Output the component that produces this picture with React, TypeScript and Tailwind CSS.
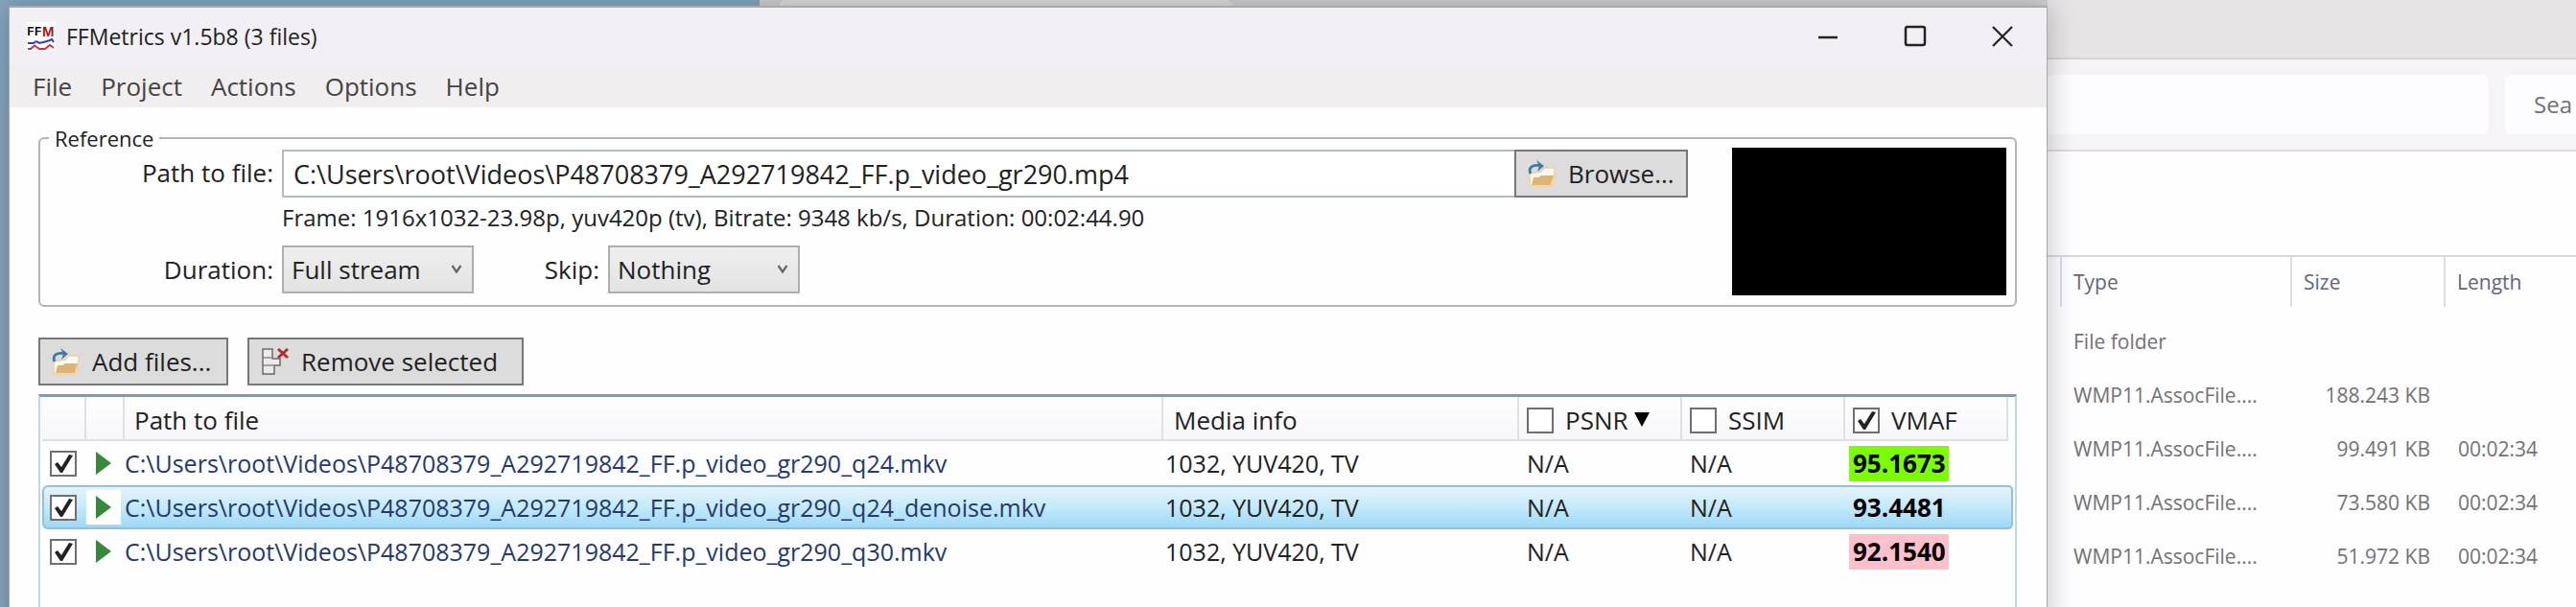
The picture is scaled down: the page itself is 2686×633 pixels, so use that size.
import type { ReactNode } from "react";

const files = [
  { name: "C:\\Users\\root\\Videos\\P48708379_A292719842_FF.p_video_gr290_q24.mkv", vmaf: "95.1673", badge: "bg-[#7bff00]", selected: false },
  { name: "C:\\Users\\root\\Videos\\P48708379_A292719842_FF.p_video_gr290_q24_denoise.mkv", vmaf: "93.4481", badge: "", selected: true },
  { name: "C:\\Users\\root\\Videos\\P48708379_A292719842_FF.p_video_gr290_q30.mkv", vmaf: "92.1540", badge: "bg-[#ffbfcb]", selected: false },
];

const explorerRows = [
  { type: "File folder", size: "", length: "" },
  { type: "WMP11.AssocFile....", size: "188.243 KB", length: "" },
  { type: "WMP11.AssocFile....", size: "99.491 KB", length: "00:02:34" },
  { type: "WMP11.AssocFile....", size: "73.580 KB", length: "00:02:34" },
  { type: "WMP11.AssocFile....", size: "51.972 KB", length: "00:02:34" },
];

function AppIcon() {
  return (
    <svg width="30" height="30" viewBox="0 0 30 30" className="bg-white" aria-hidden="true">
      <text x="0" y="14" fontFamily="Liberation Mono" fontWeight="700" fontSize="13" fill="#111">FF</text>
      <text x="16" y="15" fontFamily="Liberation Sans" fontWeight="700" fontSize="15" fill="#b31217">M</text>
      <path d="M1 22H7L9 20.5H11L13 22L17 21L21 20L24 19L26 18L28 21" fill="none" stroke="#3536c8" strokeWidth="2" />
      <path d="M1 28H4L8 24.500L13 28H19L24 24L28 27" fill="none" stroke="#c0393c" strokeWidth="2" />
    </svg>
  );
}

function OpenIcon() {
  return (
    <svg width="29" height="28" viewBox="0 0 29 28" className="shrink-0" aria-hidden="true">
      <path d="M2 14V25Q2 27 4 27H23Q25 27 26 25L28 12V10Q28 8 26 8H17L14 12Z" fill="#fffaf0" stroke="#f2cf93" strokeWidth="1.500" />
      <path d="M6 18H11L14 16H27L24 26H4Z" fill="#dfb472" />
      <path d="M3 14C0 8 5 4.500 12 5.500" fill="none" stroke="#3c79ab" strokeWidth="2.800" />
      <path d="M9 0L17 6L10 12L12 6Z" fill="#3c79ab" />
    </svg>
  );
}

function RemoveIcon() {
  return (
    <svg width="29" height="28" viewBox="0 0 29 28" className="shrink-0" aria-hidden="true">
      <path d="M2 1H12V11H20V18H14V27H2Z" fill="#eceaea" stroke="#6c6a6b" strokeWidth="1.500" />
      <path d="M2 10H12M2 18H14" fill="none" stroke="#8c8a8b" strokeWidth="1.500" />
      <path d="M18 1L28 10M28 1L18 10" stroke="#b5302a" strokeWidth="3" />
    </svg>
  );
}

function Check({ label, checked = false, id }: { label?: string; checked?: boolean; id?: string }) {
  return (
    <span className="inline-grid h-[27px] w-7 shrink-0 align-middle">
      <input
        id={id}
        type="checkbox"
        aria-label={label}
        defaultChecked={checked}
        className="peer col-start-1 row-start-1 h-[27px] w-7 appearance-none border-2 border-[#6f6f70] bg-white"
      />
      <svg viewBox="0 0 28 27" className="pointer-events-none invisible col-start-1 row-start-1 h-[27px] w-7 peer-checked:visible" aria-hidden="true">
        <path d="M5 14L8 12L12 17L20 4L24 5L13 23H11Z" fill="#222" />
      </svg>
    </span>
  );
}

function Combo({ id, value }: { id: string; value: string }) {
  return (
    <span className="grid h-[50px] w-[200px] items-center">
      <select
        id={id}
        defaultValue={value}
        className="col-start-1 row-start-1 h-full w-full appearance-none border-2 border-[#adaeb1] bg-linear-to-b from-[#efefef] to-[#e4e3e4] pr-10 pl-2"
      >
        <option>{value}</option>
      </select>
      <svg width="12" height="10" viewBox="0 0 12 10" className="pointer-events-none col-start-1 row-start-1 mr-3 justify-self-end" aria-hidden="true">
        <path d="M1.500 1L6 7.500L10.500 1" fill="none" stroke="#666" strokeWidth="2.200" />
      </svg>
    </span>
  );
}

function ToolButton({ icon, children, width }: { icon: ReactNode; children: ReactNode; width: string }) {
  return (
    <button type="button" className={`flex h-[50px] shrink-0 items-center gap-[13px] border-2 border-[#77767a] bg-[#dddcdd] pl-3 whitespace-nowrap ${width}`}>
      {icon}
      <span>{children}</span>
    </button>
  );
}

function Explorer() {
  return (
    <section aria-label="File Explorer" className="absolute top-0 right-0 bottom-0 left-[792px] flex flex-col bg-[#fefdff] text-[21px] text-[#737174]">
      <div className="flex h-[62px] shrink-0 border-b-2 border-[#d6d4d5] bg-[#e6e4e4]">
        <div className="h-2 flex-1 bg-[#d0cfd1] pl-5">
          <div className="h-2 w-[474px] rounded-t-lg bg-[#dfdfde]" />
        </div>
        <div className="w-[551px]" />
      </div>
      <div className="flex h-24 shrink-0 justify-end gap-[17px] border-b-2 border-[#dddbdd] bg-[#f6f4f7] py-4">
        <div className="w-[460px] rounded-md bg-[#fdfcfe]" />
        <div className="flex w-[74px] items-center overflow-hidden rounded-l-md bg-[#fdfcfe] pl-[30px] text-[24px]">Sea</div>
      </div>
      <div className="h-[110px] shrink-0 border-b-2 border-[#d9d8da]" />
      <table className="ml-auto w-[538px] table-fixed border-collapse">
        <colgroup>
          <col className="w-[240px]" />
          <col className="w-[160px]" />
          <col />
        </colgroup>
        <thead>
          <tr className="h-[52px] text-left text-[#62677a]">
            <th className="border-l-2 border-[#dcdde2] pl-3 font-normal">Type</th>
            <th className="border-l-2 border-[#dcdde2] pl-3 font-normal">Size</th>
            <th className="border-l-2 border-[#dcdde2] pl-3 font-normal">Length</th>
          </tr>
        </thead>
        <tbody>
          <tr className="h-2"><td colSpan={3} /></tr>
          {explorerRows.map((row, i) => (
            <tr key={i} className="h-14">
              <td className="pl-[13px] whitespace-nowrap">{row.type}</td>
              <td className="pr-[15px] text-right whitespace-nowrap">{row.size}</td>
              <td className="pl-[14px]">{row.length}</td>
            </tr>
          ))}
        </tbody>
      </table>
    </section>
  );
}

function HeaderMetric({ name, checked = false, arrow = false }: { name: string; checked?: boolean; arrow?: boolean }) {
  const id = `metric-${name}`;
  return (
    <div className="flex items-center pl-2">
      <Check id={id} checked={checked} />
      <label htmlFor={id} className="pl-3">{name}</label>
      {arrow && (
        <svg width="16" height="15" viewBox="0 0 16 15" className="mb-0.5 ml-1.5" aria-hidden="true">
          <path d="M0 0H16L8 15Z" fill="#000" />
        </svg>
      )}
    </div>
  );
}

const headCell = "border-r-2 border-b-2 border-[#dfdfe4] bg-linear-to-b from-[#fefefe] to-[#f7f6f9] p-0 pt-1 text-left font-normal";

export default function App() {
  return (
    <div className="relative h-screen overflow-hidden bg-[#86a6c0] font-['Open_Sans','Noto_Sans',sans-serif] text-[26px] leading-8 text-[#222]">
      <Explorer />
      <main className="absolute top-1.5 right-[551px] bottom-[-20px] left-[9px] flex flex-col border-x border-t-2 border-[#a9a9ad] bg-[#fefdff] shadow-[0_0_28px_rgba(0,0,0,0.25)]">
        <header className="flex h-15 shrink-0 items-center bg-[#f3f0f5] pl-[18px]">
          <AppIcon />
          <h1 className="pl-[11px] text-[23px]">FFMetrics v1.5b8 (3 files)</h1>
          <div className="mr-[34px] ml-auto flex items-center gap-[67px]">
            <button type="button" aria-label="Minimize" className="block">
              <svg width="24" height="24" viewBox="0 0 24 24"><path d="M2 13H22" stroke="#222" strokeWidth="2.500" /></svg>
            </button>
            <button type="button" aria-label="Maximize" className="block">
              <svg width="24" height="24" viewBox="0 0 24 24"><rect x="2" y="2" width="20" height="19" rx="2" fill="none" stroke="#222" strokeWidth="2.500" /></svg>
            </button>
            <button type="button" aria-label="Close" className="block">
              <svg width="24" height="24" viewBox="0 0 24 24"><path d="M2 2L22 22M22 2L2 22" stroke="#222" strokeWidth="2.200" /></svg>
            </button>
          </div>
        </header>
        <nav className="flex h-11 shrink-0 items-center gap-[30px] bg-[#f0eeef] pl-6 text-[#444]">
          <button type="button">File</button>
          <button type="button">Project</button>
          <button type="button">Actions</button>
          <button type="button">Options</button>
          <button type="button">Help</button>
        </nav>
        <div className="flex min-h-0 flex-1 flex-col pr-[31px] pl-[30px]">
          <fieldset className="mt-[22px] flex h-[186px] shrink-0 justify-between rounded-md border-2 border-[#b4b3b6] pr-[9px] pl-[9px]">
            <legend className="px-1.5 text-[22px] leading-5">Reference</legend>
            <div className="mt-0.5 grid flex-1 grid-cols-[234px_1fr] content-start gap-x-[9px]">
              <label htmlFor="path" className="self-center pb-0.5 text-right">Path to file:</label>
              <div className="flex">
                <input id="path" type="text" className="h-[50px] min-w-0 flex-1 border-2 border-r-0 border-[#b6bac2] bg-white px-[10px] text-[27px]" defaultValue="C:\Users\root\Videos\P48708379_A292719842_FF.p_video_gr290.mp4" />
                <ToolButton icon={<OpenIcon />} width="w-[181px]">Browse...</ToolButton>
              </div>
              <p className="col-start-2 pt-[5px] pb-[13px] text-[24px]">Frame: 1916x1032-23.98p, yuv420p (tv), Bitrate: 9348 kb/s, Duration: 00:02:44.90</p>
              <label htmlFor="duration" className="self-center text-right">Duration:</label>
              <div className="flex items-center">
                <Combo id="duration" value="Full stream" />
                <label htmlFor="skip" className="w-[131px] text-right">Skip:</label>
                <span className="pl-[9px]"><Combo id="skip" value="Nothing" /></span>
              </div>
            </div>
            <div className="ml-[46px] h-[154px] w-[286px] bg-black" />
          </fieldset>
          <div className="mt-8 flex gap-5">
            <ToolButton icon={<OpenIcon />} width="w-[198px]">Add files...</ToolButton>
            <ToolButton icon={<RemoveIcon />} width="w-[288px]">Remove selected</ToolButton>
          </div>
          <div className="mt-[9px] flex-1 border-2 border-t-[3px] border-[#bcd9e8] border-t-[#7b9db2] px-0.5">
            <table className="w-full table-fixed border-separate border-spacing-0">
              <colgroup>
                <col className="w-[46px]" />
                <col className="w-10" />
                <col />
                <col className="w-[371px]" />
                <col className="w-[170px]" />
                <col className="w-[170px]" />
                <col className="w-[170px]" />
                <col className="w-[5px]" />
              </colgroup>
              <thead>
                <tr className="h-[46px]">
                  <th className={headCell} />
                  <th className={headCell} />
                  <th className={headCell}><span className="pl-[10px]">Path to file</span></th>
                  <th className={headCell}><span className="pl-[11px]">Media info</span></th>
                  <th className={headCell}><HeaderMetric name="PSNR" arrow /></th>
                  <th className={headCell}><HeaderMetric name="SSIM" /></th>
                  <th className={headCell}><HeaderMetric name="VMAF" checked /></th>
                  <th />
                </tr>
              </thead>
              <tbody>
                {files.map((file) => {
                  const cell = file.selected
                    ? "border-y-2 border-[#94c0dc] bg-linear-to-b from-[#e3f4fc] via-[#c4e9fa] via-50% to-[#9dd8f7] p-0"
                    : "border-y-2 border-transparent p-0";
                  return (
                    <tr key={file.name} className="h-[46px] text-[25px] whitespace-nowrap">
                      <td className={`${cell} rounded-l-md border-l-2 leading-none`}>
                        <div className="flex pl-1.5"><Check label={`Include ${file.name}`} checked /></div>
                      </td>
                      <td className={cell}>
                        <div className="flex h-9 w-9 items-center bg-white pl-[9px]">
                          <svg width="18" height="24" viewBox="0 0 18 24" aria-hidden="true"><path d="M1 0L17 12L1 24Z" fill="#37883a" /></svg>
                        </div>
                      </td>
                      <td className={`${cell} text-[#25396e]`}>{file.name}</td>
                      <td className={`${cell} text-[#222]`}><span className="pl-0.5">1032, YUV420, TV</span></td>
                      <td className={cell}><span className="pl-2">N/A</span></td>
                      <td className={cell}><span className="pl-2">N/A</span></td>
                      <td className={cell}>
                        <span className={`ml-1 inline-block h-[37px] w-26 pl-1 align-middle text-[26px] leading-9 font-bold text-black ${file.badge}`}>{file.vmaf}</span>
                      </td>
                      <td className={`${cell} rounded-r-md border-r-2`} />
                    </tr>
                  );
                })}
              </tbody>
            </table>
          </div>
        </div>
      </main>
    </div>
  );
}
